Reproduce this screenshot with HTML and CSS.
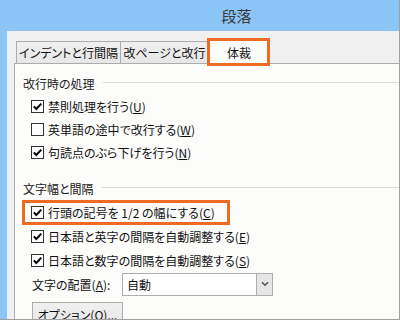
FILE: index.html
```html
<!DOCTYPE html>
<html lang="ja">
<head>
<meta charset="utf-8">
<link rel="stylesheet" href="styles.css">
</head>
<body>
<div class="window">
  <div class="titlebar">段落</div>
  <div class="frame">
    <div class="tabs">
      <div class="tab">インデントと行間隔</div>
      <div class="tab">改ページと改行</div>
      <div class="tab selected">体裁</div>
      <div class="mark mark-tab"></div>
    </div>
    <div class="panel">
      <div class="group-title"><span>改行時の処理</span></div>
      <div class="row"><span class="cb checked"><svg viewBox="0 0 11 11" width="11" height="11"><path d="M1.8 5.4 L4.3 8 L9.3 2.6" fill="none" stroke="#000" stroke-width="2"/></svg></span><span>禁則処理を行う(<u>U</u>)</span></div>
      <div class="row"><span class="cb"></span><span>英単語の途中で改行する(<u>W</u>)</span></div>
      <div class="row"><span class="cb checked"><svg viewBox="0 0 11 11" width="11" height="11"><path d="M1.8 5.4 L4.3 8 L9.3 2.6" fill="none" stroke="#000" stroke-width="2"/></svg></span><span>句読点のぶら下げを行う(<u>N</u>)</span></div>

      <div class="group-title second"><span>文字幅と間隔</span></div>
      <div class="row tall highlighted"><span class="cb checked"><svg viewBox="0 0 11 11" width="11" height="11"><path d="M1.8 5.4 L4.3 8 L9.3 2.6" fill="none" stroke="#000" stroke-width="2"/></svg></span><span>行頭の記号を 1/2 の幅にする(<u>C</u>)</span><div class="mark mark-row"></div></div>
      <div class="row tall"><span class="cb checked"><svg viewBox="0 0 11 11" width="11" height="11"><path d="M1.8 5.4 L4.3 8 L9.3 2.6" fill="none" stroke="#000" stroke-width="2"/></svg></span><span>日本語と英字の間隔を自動調整する(<u>E</u>)</span></div>
      <div class="row tall"><span class="cb checked"><svg viewBox="0 0 11 11" width="11" height="11"><path d="M1.8 5.4 L4.3 8 L9.3 2.6" fill="none" stroke="#000" stroke-width="2"/></svg></span><span>日本語と数字の間隔を自動調整する(<u>S</u>)</span></div>
      <div class="select-row">
        <span class="label">文字の配置(<u>A</u>):</span>
        <div class="select">
          <span class="value">自動</span>
          <span class="arrow"><svg viewBox="0 0 8 6" width="8" height="6"><path d="M1 1.2 L4 4.2 L7 1.2" fill="none" stroke="#555" stroke-width="1.6"/></svg></span>
        </div>
      </div>
      <div class="button-row"><div class="button">オプション(<u>O</u>)...</div></div>
    </div>
  </div>
</div>
</body>
</html>
```

FILE: styles.css
```css
* { box-sizing: border-box; }
html, body { margin: 0; padding: 0; }
body {
  font-family: "Noto Sans CJK JP", "Noto Sans", sans-serif;
  font-size: 12px;
  color: #111;
  font-feature-settings: "palt";
}
.window {
  width: 400px;
  height: 320px;
  background: #8bc5f6;
  border-right: 1px solid #a0a0a0;
  border-bottom: 1px solid #a0a0a0;
  display: flex;
  flex-direction: column;
  overflow: hidden;
}
.titlebar {
  height: 31px;
  flex: none;
  display: flex;
  align-items: center;
  justify-content: center;
  padding-left: 74px;
  font-size: 15px;
  color: #3a3a3a;
  letter-spacing: 0;
}
.frame {
  flex: 1;
  margin-left: 7px;
  background: #f0f0f0;
  padding: 8px 0 0 7px;
  display: flex;
  flex-direction: column;
  min-height: 0;
}
.tabs {
  position: relative;
  height: 24px;
  flex: none;
  display: flex;
  align-items: flex-end;
  padding-left: 2px;
}
.tab {
  height: 22px;
  border: 1px solid #acacac;
  border-bottom: none;
  background: linear-gradient(#f0f0f0, #e6e6e6);
  display: flex;
  align-items: center;
  justify-content: center;
  font-size: 12px;
  color: #111;
}
.tab:nth-child(1) { width: 105px; }
.tab:nth-child(2) { width: 89px; margin-left: -1px; }
.tab.selected {
  width: 62px;
  margin-left: -1px;
  height: 25px;
  margin-bottom: -1px;
  background: #fcfcfb;
  position: relative;
  z-index: 1;
}
.mark {
  position: absolute;
  border: 3px solid #ef6b23;
  z-index: 2;
}
.mark-tab {
  left: 193px;
  top: -1px;
  width: 63px;
  height: 28px;
}
.panel {
  flex: 1;
  min-height: 0;
  background: #fcfcfb;
  border-top: 1px solid #acacac;
  border-left: 1px solid #acacac;
  padding-top: 10px;
  overflow: hidden;
}
.group-title {
  display: flex;
  align-items: center;
  gap: 8px;
  height: 18px;
  padding-left: 8px;
  color: #222;
}
.group-title::after {
  content: "";
  flex: 1;
  height: 1px;
  background: #dadada;
  margin-top: -2px;
}
.group-title.second { margin-top: 15px; }
.row {
  height: 23px;
  display: flex;
  align-items: center;
  gap: 4px;
  padding-left: 16px;
}
.group-title + .row { margin-top: 3px; }
.row.tall { height: 24px; }
.highlighted { position: relative; margin-top: 3px !important; }
.mark-row {
  left: 7px;
  top: 0;
  width: 208px;
  height: 25px;
}
.cb {
  width: 13px;
  height: 13px;
  border: 1px solid #333;
  background: #fff;
  display: flex;
  align-items: center;
  justify-content: center;
  flex: none;
}
.cb svg { display: block; }
u { text-decoration: underline; text-underline-offset: 1px; }
.select-row {
  height: 24px;
  display: flex;
  align-items: center;
  padding-left: 17px;
}
.label { width: 90px; }
.select {
  width: 151px;
  height: 23px;
  border: 1px solid #acacac;
  background: #fff;
  display: flex;
  align-items: stretch;
}
.select .value {
  flex: 1;
  padding-left: 4px;
  display: flex;
  align-items: center;
}
.select .arrow {
  width: 16px;
  background: #e6e6e6;
  border-left: 1px solid #acacac;
  display: flex;
  align-items: center;
  justify-content: center;
}
.button-row {
  padding-left: 17px;
  margin-top: 6px;
}
.button {
  width: 91px;
  height: 24px;
  border: 1px solid #acacac;
  background: linear-gradient(#f0f0f0, #e5e5e5);
  display: flex;
  align-items: center;
  justify-content: center;
}
```
